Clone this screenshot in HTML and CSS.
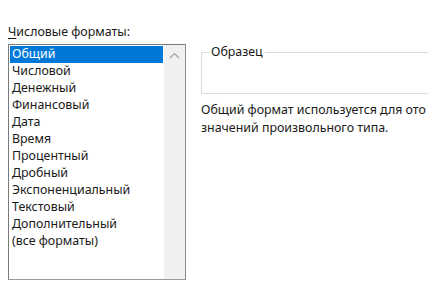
FILE: index.html
```html
<!DOCTYPE html>
<html lang="ru">
<head>
    <meta charset="UTF-8">
    <title>Формат ячеек</title>
    <link rel="stylesheet" href="styles.css">
</head>
<body>
    <div class="dialog">
        <div class="left">
            <div class="label"><u>Ч</u>исловые форматы:</div>
            <div class="listbox">
                <ul class="items">
                    <li class="selected">Общий</li>
                    <li>Числовой</li>
                    <li>Денежный</li>
                    <li>Финансовый</li>
                    <li>Дата</li>
                    <li>Время</li>
                    <li>Процентный</li>
                    <li>Дробный</li>
                    <li>Экспоненциальный</li>
                    <li>Текстовый</li>
                    <li>Дополнительный</li>
                    <li>(все форматы)</li>
                </ul>
                <div class="scrollbar">
                    <svg width="11" height="7" viewBox="0 0 11 7" fill="none" stroke="#a0a0a0" stroke-width="1.2">
                        <polyline points="1,6 5.5,1.5 10,6"></polyline>
                    </svg>
                </div>
            </div>
        </div>
        <div class="right">
            <fieldset class="sample">
                <legend>Образец</legend>
            </fieldset>
            <p class="desc">Общий формат используется для ото<br>значений произвольного типа.</p>
        </div>
    </div>
</body>
</html>
```

FILE: styles.css
```css
body {
    margin: 0;
    background-color: #fff;
    font-family: "Noto Sans", "Open Sans", sans-serif;
    font-size: 12.4px;
    color: #1a1a1a;
    overflow: hidden;
}

.dialog {
    display: flex;
    padding: 23px 0 0 8px;
}

.left {
    width: 178px;
    flex-shrink: 0;
}

.label {
    line-height: 17px;
    height: 21px;
}

.label u {
    text-decoration-thickness: 1px;
    text-underline-offset: 2px;
}

.listbox {
    display: flex;
    height: 234px;
    border: 1px solid #7a7a7a;
    border-right-color: #8a8a8a;
    border-bottom-color: #9a9a9a;
}

.items {
    list-style: none;
    margin: 0;
    padding: 1px 1px 0 1px;
    flex: 1;
}

.items li {
    height: 17px;
    line-height: 16px;
    padding-left: 2px;
}

.items li.selected {
    background-color: #0078d7;
    color: #fff;
}

.scrollbar {
    width: 21px;
    background-color: #f0f0f0;
    display: flex;
    justify-content: center;
    padding-top: 7px;
    box-sizing: border-box;
}

.scrollbar svg {
    display: block;
}

.right {
    padding: 21px 0 0 15px;
    flex: 1;
}

.sample {
    margin: 0;
    padding: 0;
    height: 48px;
    border: 1px solid #dcdcdc;
    border-right: none;
}

.sample legend {
    padding: 0 2px 0 1px;
    margin-left: 8px;
    line-height: 16px;
}

.desc {
    margin: 7px 0 0 0;
    line-height: 18px;
    white-space: nowrap;
}
```
